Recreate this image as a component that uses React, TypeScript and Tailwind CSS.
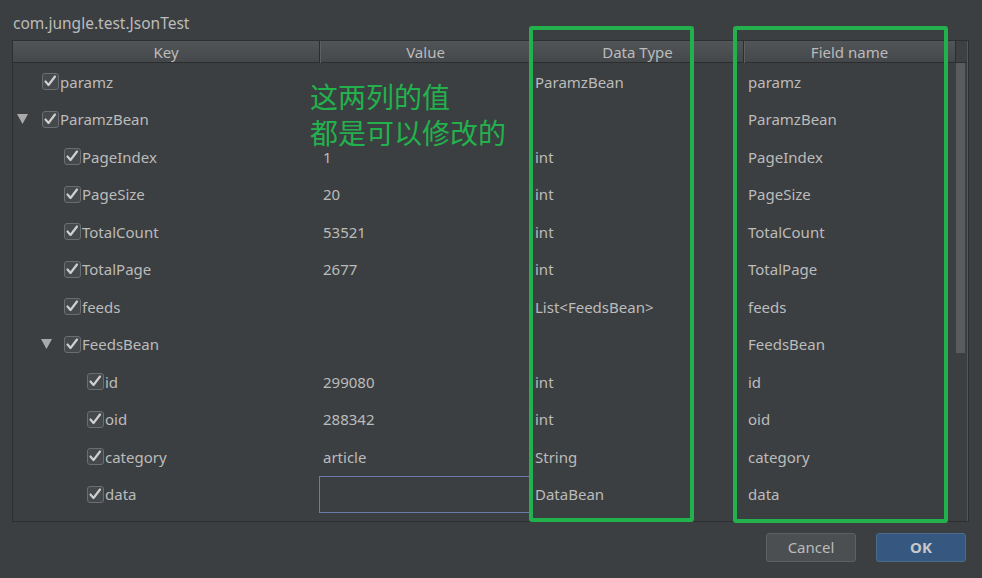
import React from "react";

type Row = {
  key: string;
  value?: string;
  type?: string;
  field: string;
  level: 0 | 1 | 2;
  expand?: boolean;
  edit?: boolean;
};

const rows: Row[] = [
  { key: "paramz", type: "ParamzBean", field: "paramz", level: 0 },
  { key: "ParamzBean", field: "ParamzBean", level: 0, expand: true },
  { key: "PageIndex", value: "1", type: "int", field: "PageIndex", level: 1 },
  { key: "PageSize", value: "20", type: "int", field: "PageSize", level: 1 },
  { key: "TotalCount", value: "53521", type: "int", field: "TotalCount", level: 1 },
  { key: "TotalPage", value: "2677", type: "int", field: "TotalPage", level: 1 },
  { key: "feeds", type: "List<FeedsBean>", field: "feeds", level: 1 },
  { key: "FeedsBean", field: "FeedsBean", level: 1, expand: true },
  { key: "id", value: "299080", type: "int", field: "id", level: 2 },
  { key: "oid", value: "288342", type: "int", field: "oid", level: 2 },
  { key: "category", value: "article", type: "String", field: "category", level: 2 },
  { key: "data", type: "DataBean", field: "data", level: 2, edit: true },
];

const padByLevel = ["pl-[4px]", "pl-[28px]", "pl-[51px]"];
const gapByLevel = ["ml-[14px]", "ml-[12px]", "ml-[12px]"];

function Triangle({ show }: { show: boolean }) {
  return (
    <div className="w-[11px] h-[10px] shrink-0">
      {show && (
        <svg width="11" height="10" viewBox="0 0 11 10">
          <polygon points="0,0 11,0 5.5,10" fill="#a9a9a9" />
        </svg>
      )}
    </div>
  );
}

function Checkbox() {
  return (
    <div className="w-[17px] h-[17px] shrink-0 rounded-[3px] border border-[#6b6e70] bg-[#45494b] flex items-center justify-center">
      <svg width="15" height="15" viewBox="0 0 15 15">
        <path d="M2.5 7.5 L5.5 11 L12 2.5" stroke="#cfcfcf" strokeWidth="2.2" fill="none" strokeLinecap="round" strokeLinejoin="round" />
      </svg>
    </div>
  );
}

export default function App() {
  return (
    <div
      className="relative w-[982px] h-[578px] bg-[#3c3f41] text-[#bbbbbb] overflow-hidden"
      style={{ fontFamily: '"Noto Sans", "Noto Sans CJK SC", sans-serif' }}
    >
      <div className="h-[40px] pl-[13px] pt-[12px] text-[15.5px] leading-[22px]">com.jungle.test.JsonTest</div>

      <div className="ml-[12px] w-[957px] h-[482px] border border-[#2d2f31] flex">
        <div className="w-[942px] flex flex-col">
          <div className="h-[22px] grid grid-cols-[306px_212px_212px_212px] bg-gradient-to-b from-[#515558] to-[#45484b] border-b border-[#2b2d2f] text-[15px] leading-[22px]">
            <div className="text-center">Key</div>
            <div className="text-center border-l border-[#2b2d2f] shadow-[inset_1px_0_0_#5c6063]">Value</div>
            <div className="text-center border-l border-[#2b2d2f] shadow-[inset_1px_0_0_#5c6063]">Data Type</div>
            <div className="text-center border-l border-[#2b2d2f] shadow-[inset_1px_0_0_#5c6063]">Field name</div>
          </div>
          {rows.map((r, i) => (
            <div key={i} className="h-[37.5px] grid grid-cols-[306px_212px_212px_212px] text-[15px]">
              <div className={"flex items-center " + padByLevel[r.level]}>
                <Triangle show={!!r.expand} />
                <div className={gapByLevel[r.level]}>
                  <Checkbox />
                </div>
                <span className="ml-[1px]">{r.key}</span>
              </div>
              {r.edit ? (
                <div className="border border-[#6b7aa6]" />
              ) : (
                <div className="flex items-center pl-[4px]">{r.value ?? ""}</div>
              )}
              <div className="flex items-center pl-[4px]">{r.type ?? ""}</div>
              <div className="flex items-center pl-[5px]">{r.field}</div>
            </div>
          ))}
        </div>
        <div className="w-[13px] flex flex-col border-r border-[#555859]">
          <div className="h-[22px] bg-[#3e4143] border-b border-[#2b2d2f] border-l border-l-[#2b2d2f]" />
          <div className="pl-[1px] pr-[2px]">
            <div className="h-[290px] bg-[#595c5e]" />
          </div>
        </div>
      </div>

      <div className="flex justify-end gap-[20px] pr-[16px] pt-[11px]">
        <button className="w-[90px] h-[29px] rounded-[3px] bg-[#4b4f51] border border-[#5e6162] text-[15px] text-[#bbbbbb]">
          Cancel
        </button>
        <button className="w-[90px] h-[29px] rounded-[3px] bg-[#365880] border border-[#4a6b8a] text-[15px] font-bold text-[#c8c8c8]">
          OK
        </button>
      </div>

      <div
        className="absolute left-[310px] top-[78px] text-[28px] leading-[36px] text-[#22b14c]"
        style={{ fontFamily: '"Noto Sans CJK SC", sans-serif' }}
      >
        <div>这两列的值</div>
        <div>都是可以修改的</div>
      </div>

      <div className="absolute left-[529px] top-[26px] w-[165px] h-[496px] border-[4px] border-[#22b14c] rounded-[3px]" />
      <div className="absolute left-[733px] top-[26px] w-[215px] h-[497px] border-[4px] border-[#22b14c] rounded-[3px]" />
    </div>
  );
}
